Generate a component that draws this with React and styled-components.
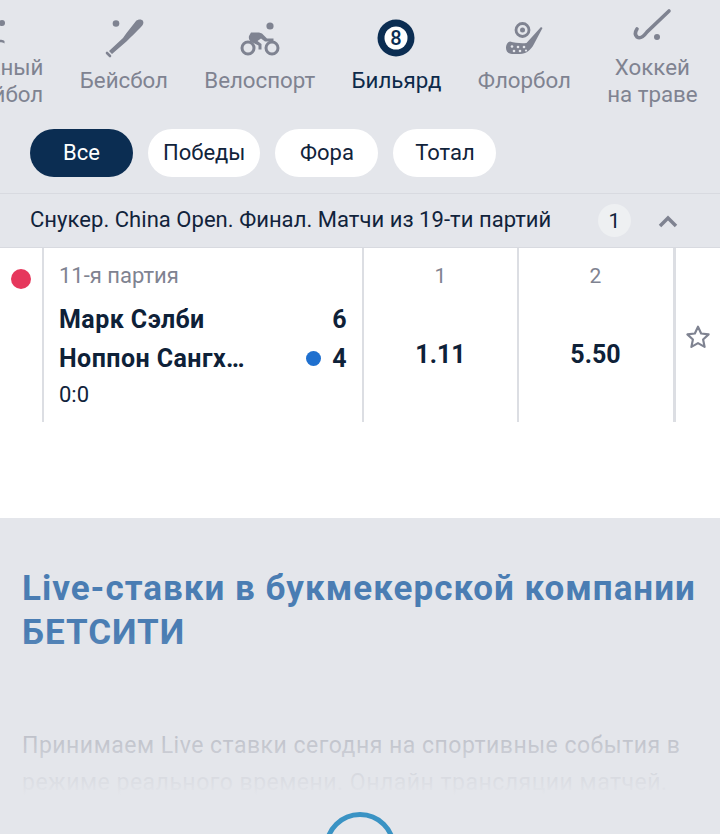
import React from 'react';
import styled, { createGlobalStyle } from 'styled-components';

const GlobalStyle = createGlobalStyle`
  html, body {
    margin: 0;
    padding: 0;
    background: #e4e6eb;
    overflow: hidden;
  }
  * {
    box-sizing: border-box;
  }
`;

const Page = styled.div`
  width: 720px;
  height: 834px;
  overflow: hidden;
  font-family: Roboto, "Liberation Sans", sans-serif;
  background: #e4e6eb;
  color: #11233b;
`;

const SportsBar = styled.div`
  display: flex;
  align-items: flex-start;
  gap: 36.3px;
  height: 129px;
  margin-left: -57.7px;
`;

const Sport = styled.div`
  flex: none;
  min-width: ${(p) => (p.$wide ? '90px' : '70px')};
  height: 120px;
  display: flex;
  flex-direction: column;
  align-items: center;
  color: ${(p) => (p.$active ? '#0d2a4a' : '#7f8391')};
`;

const SportIcon = styled.svg`
  flex: none;
  width: 60px;
  height: 60px;
  margin-top: ${(p) => (p.$two ? '0' : '8px')};
`;

const SportName = styled.div`
  font-size: 22.3px;
  line-height: 27px;
  text-align: center;
  white-space: nowrap;
  margin-top: ${(p) => (p.$two ? '-6px' : '-1px')};
`;

const FilterRow = styled.div`
  display: flex;
  gap: 15px;
  padding-left: 30px;
  height: 64px;
`;

const Pill = styled.div`
  min-width: 103px;
  height: 48px;
  padding: 0 15px 2px;
  border-radius: 24px;
  display: flex;
  align-items: center;
  justify-content: center;
  font-size: 22px;
  background: ${(p) => (p.$active ? '#0b2d52' : '#fff')};
  color: ${(p) => (p.$active ? '#fff' : '#11233b')};
`;

const GroupHeader = styled.div`
  height: 55px;
  display: flex;
  align-items: center;
  padding-left: 30px;
  border-top: 1px solid #d8dae0;
  border-bottom: 1px solid #d8dae0;
`;

const GroupTitle = styled.div`
  font-size: 22px;
  letter-spacing: 0.04px;
  margin-top: -2px;
  color: #11233b;
  flex: 1;
  white-space: nowrap;
`;

const CountBadge = styled.div`
  width: 33px;
  height: 33px;
  border-radius: 50%;
  background: #eef0f2;
  display: flex;
  align-items: center;
  justify-content: center;
  font-size: 21px;
  margin-right: 26px;
`;

const Chevron = styled.svg`
  width: 22px;
  height: 14px;
  margin-right: 41px;
`;

const MatchArea = styled.div`
  height: 270px;
  background: #fff;
`;

const MatchRow = styled.div`
  height: 174px;
  display: flex;
`;

const LiveCol = styled.div`
  width: 42px;
  padding: 21px 0 0 11px;
`;

const LiveDot = styled.div`
  width: 20px;
  height: 20px;
  border-radius: 50%;
  background: #e6375c;
`;

const InfoCol = styled.div`
  width: 320px;
  border-left: 2px solid #dcdee3;
  padding: 14px 15px 0 15px;
`;

const Period = styled.div`
  font-size: 22px;
  line-height: 28px;
  color: #7f8391;
`;

const TeamList = styled.div`
  margin-top: 10px;
`;

const Team = styled.div`
  display: flex;
  align-items: center;
  height: 39px;
  font-size: 25px;
  letter-spacing: 0.45px;
  font-weight: 700;
  color: #0e2138;
`;

const TeamName = styled.span`
  flex: 1;
`;

const ServeDot = styled.span`
  width: 15px;
  height: 15px;
  border-radius: 50%;
  background: #1f70cf;
  margin-right: 11px;
`;

const SetScore = styled.div`
  font-size: 22px;
  line-height: 28px;
  margin-top: 3px;
  color: #11233b;
`;

const OddCol = styled.div`
  width: 155px;
  border-left: 2px solid #dcdee3;
  display: flex;
  flex-direction: column;
  align-items: center;
`;

const OddLabel = styled.div`
  font-size: 21px;
  line-height: 28px;
  margin-top: 14px;
  color: #7f8391;
`;

const OddValue = styled.div`
  font-size: 25px;
  line-height: 30px;
  font-weight: 700;
  margin-top: 50px;
  color: #0e2138;
`;

const FavCol = styled.div`
  width: 47px;
  margin-left: 1px;
  border-left: 3px solid #dcdee3;
  display: flex;
  justify-content: center;
  padding-top: 76px;
`;

const Info = styled.section`
  position: relative;
  padding: 49px 22px 0;
`;

const InfoTitle = styled.h1`
  margin: 0;
  font-size: 35px;
  letter-spacing: 1px;
  line-height: 43.5px;
  font-weight: 700;
  color: #4a7db3;
  white-space: nowrap;
`;

const InfoText = styled.p`
  margin: 73px 0 0;
  font-size: 23px;
  letter-spacing: 0.5px;
  line-height: 37px;
  color: #7f8391;
  white-space: nowrap;
`;

const Fade = styled.div`
  position: absolute;
  left: 0;
  right: 0;
  top: 116px;
  height: 200px;
  background: linear-gradient(rgba(228, 230, 235, 0), #e4e6eb 161px);
`;

const Spinner = styled.div`
  position: absolute;
  left: 324px;
  top: 294px;
  width: 72px;
  height: 72px;
  border: 5px solid #3a93c4;
  border-radius: 50%;
`;

const sports = [
  {
    lines: ['Пляжный', 'волейбол'],
    icon: (
      <g fill="#7f8391">
        <circle cx="31" cy="12" r="4.500" />
        <circle cx="39" cy="23" r="3" />
        <path d="M21 17l4-2 10 9 1.500 4-3 1-5-1-8-6z" />
        <path d="M24 41c3-2 5 1 8.500 0s5-2 9 0v2.500c-4-2-5.500-1-9 0s-5.500-2-8.500 0z" />
      </g>
    ),
  },
  {
    lines: ['Бейсбол'],
    icon: (
      <g fill="#7f8391">
        <circle cx="22" cy="15.500" r="3.300" />
        <path d="M15 43L29 30C33 24 38 18 42 13C44 11 48 11 49 13C50 15 49 17 47 19C42 24 37 29 33 33L18 46Z" />
        <path d="M13 45l3 3" stroke="#7f8391" strokeWidth="2.600" strokeLinecap="round" />
      </g>
    ),
  },
  {
    lines: ['Велоспорт'],
    icon: (
      <g>
        <circle cx="40" cy="18" r="3.600" fill="#7f8391" />
        <path d="M21 24.500h8l3 1 5 5h6.500v3H35l-4-3-3.500 2.500 4 3v5.500h-3v-4l-7-3.500c-2.500-1.500-3-3.500-2.500-6z" fill="#7f8391" />
        <circle cx="18" cy="40" r="6" fill="none" stroke="#7f8391" strokeWidth="3" />
        <circle cx="42" cy="40" r="6" fill="none" stroke="#7f8391" strokeWidth="3" />
      </g>
    ),
  },
  {
    lines: ['Бильярд'],
    active: true,
    icon: (
      <g>
        <circle cx="30" cy="30" r="18.500" fill="#0b2d52" />
        <circle cx="30" cy="30" r="11.500" fill="#fff" />
        <text x="30" y="37" textAnchor="middle" fontSize="20" fontWeight="500" fontFamily="Roboto, sans-serif" fill="#0b2d52">8</text>
      </g>
    ),
  },
  {
    lines: ['Флорбол'],
    icon: (
      <g fill="#7f8391">
        <circle cx="28.500" cy="22" r="6.500" fill="none" stroke="#7f8391" strokeWidth="2.800" />
        <circle cx="28.500" cy="22" r="2.500" />
        <path d="M16 33.500c5 1.500 11 2 16.500 1.500L47 19l1.500 1L40 36c-3 6-8 10-14 10h-8c-4 0-6-3-6-6 0-3 1.500-6 4-6.500z" />
        <g fill="#e4e6eb">
          <circle cx="18" cy="38.500" r="1.300" />
          <circle cx="24" cy="39" r="1.300" />
          <circle cx="30" cy="39" r="1.300" />
          <circle cx="20" cy="43" r="1.300" />
          <circle cx="26" cy="43" r="1.300" />
          <circle cx="32" cy="42.500" r="1.100" />
        </g>
      </g>
    ),
  },
  {
    lines: ['Хоккей', 'на траве'],
    wide: true,
    icon: (
      <g fill="none" stroke="#7f8391" strokeWidth="3.600" strokeLinecap="round">
        <path d="M47 11L25 32c-3 4-7 7-10 5-2-2-2-5 0-8" />
        <circle cx="35" cy="37" r="3" fill="#7f8391" stroke="none" />
      </g>
    ),
  },
];

const filters = ['Все', 'Победы', 'Фора', 'Тотал'];

const App = () => {
  return (
    <Page>
      <GlobalStyle />
      <SportsBar>
        {sports.map((s) => (
          <Sport key={s.lines[0]} $active={s.active} $wide={s.wide}>
            <SportIcon viewBox="0 0 60 60" $two={s.lines.length > 1}>{s.icon}</SportIcon>
            <SportName $two={s.lines.length > 1}>
              {s.lines.map((line) => (
                <div key={line}>{line}</div>
              ))}
            </SportName>
          </Sport>
        ))}
      </SportsBar>
      <FilterRow>
        {filters.map((f, i) => (
          <Pill key={f} $active={i === 0}>{f}</Pill>
        ))}
      </FilterRow>
      <GroupHeader>
        <GroupTitle>Снукер. China Open. Финал. Матчи из 19-ти партий</GroupTitle>
        <CountBadge>1</CountBadge>
        <Chevron viewBox="0 0 22 14">
          <path d="M3 12l8-8 8 8" fill="none" stroke="#7f8391" strokeWidth="3.500" />
        </Chevron>
      </GroupHeader>
      <MatchArea>
        <MatchRow>
          <LiveCol><LiveDot /></LiveCol>
          <InfoCol>
            <Period>11-я партия</Period>
            <TeamList>
              <Team><TeamName>Марк Сэлби</TeamName>6</Team>
              <Team><TeamName>Ноппон Сангх…</TeamName><ServeDot />4</Team>
            </TeamList>
            <SetScore>0:0</SetScore>
          </InfoCol>
          <OddCol><OddLabel>1</OddLabel><OddValue>1.11</OddValue></OddCol>
          <OddCol><OddLabel>2</OddLabel><OddValue>5.50</OddValue></OddCol>
          <FavCol>
            <svg width="26" height="26" viewBox="0 0 24 24" fill="none" stroke="#7f8391" strokeWidth="2" strokeLinejoin="round">
              <path d="M12 2.500l2.900 6.300 6.900.8-5.100 4.700 1.400 6.800-6.100-3.400-6.100 3.400 1.400-6.800-5.100-4.700 6.900-.8z" />
            </svg>
          </FavCol>
        </MatchRow>
      </MatchArea>
      <Info>
        <InfoTitle>
          Live-ставки в букмекерской компании
          <br />
          БЕТСИТИ
        </InfoTitle>
        <InfoText>
          Принимаем Live ставки сегодня на спортивные события в
          <br />
          режиме реального времени. Онлайн трансляции матчей.
        </InfoText>
        <Fade />
        <Spinner />
      </Info>
    </Page>
  );
};

export default App;
